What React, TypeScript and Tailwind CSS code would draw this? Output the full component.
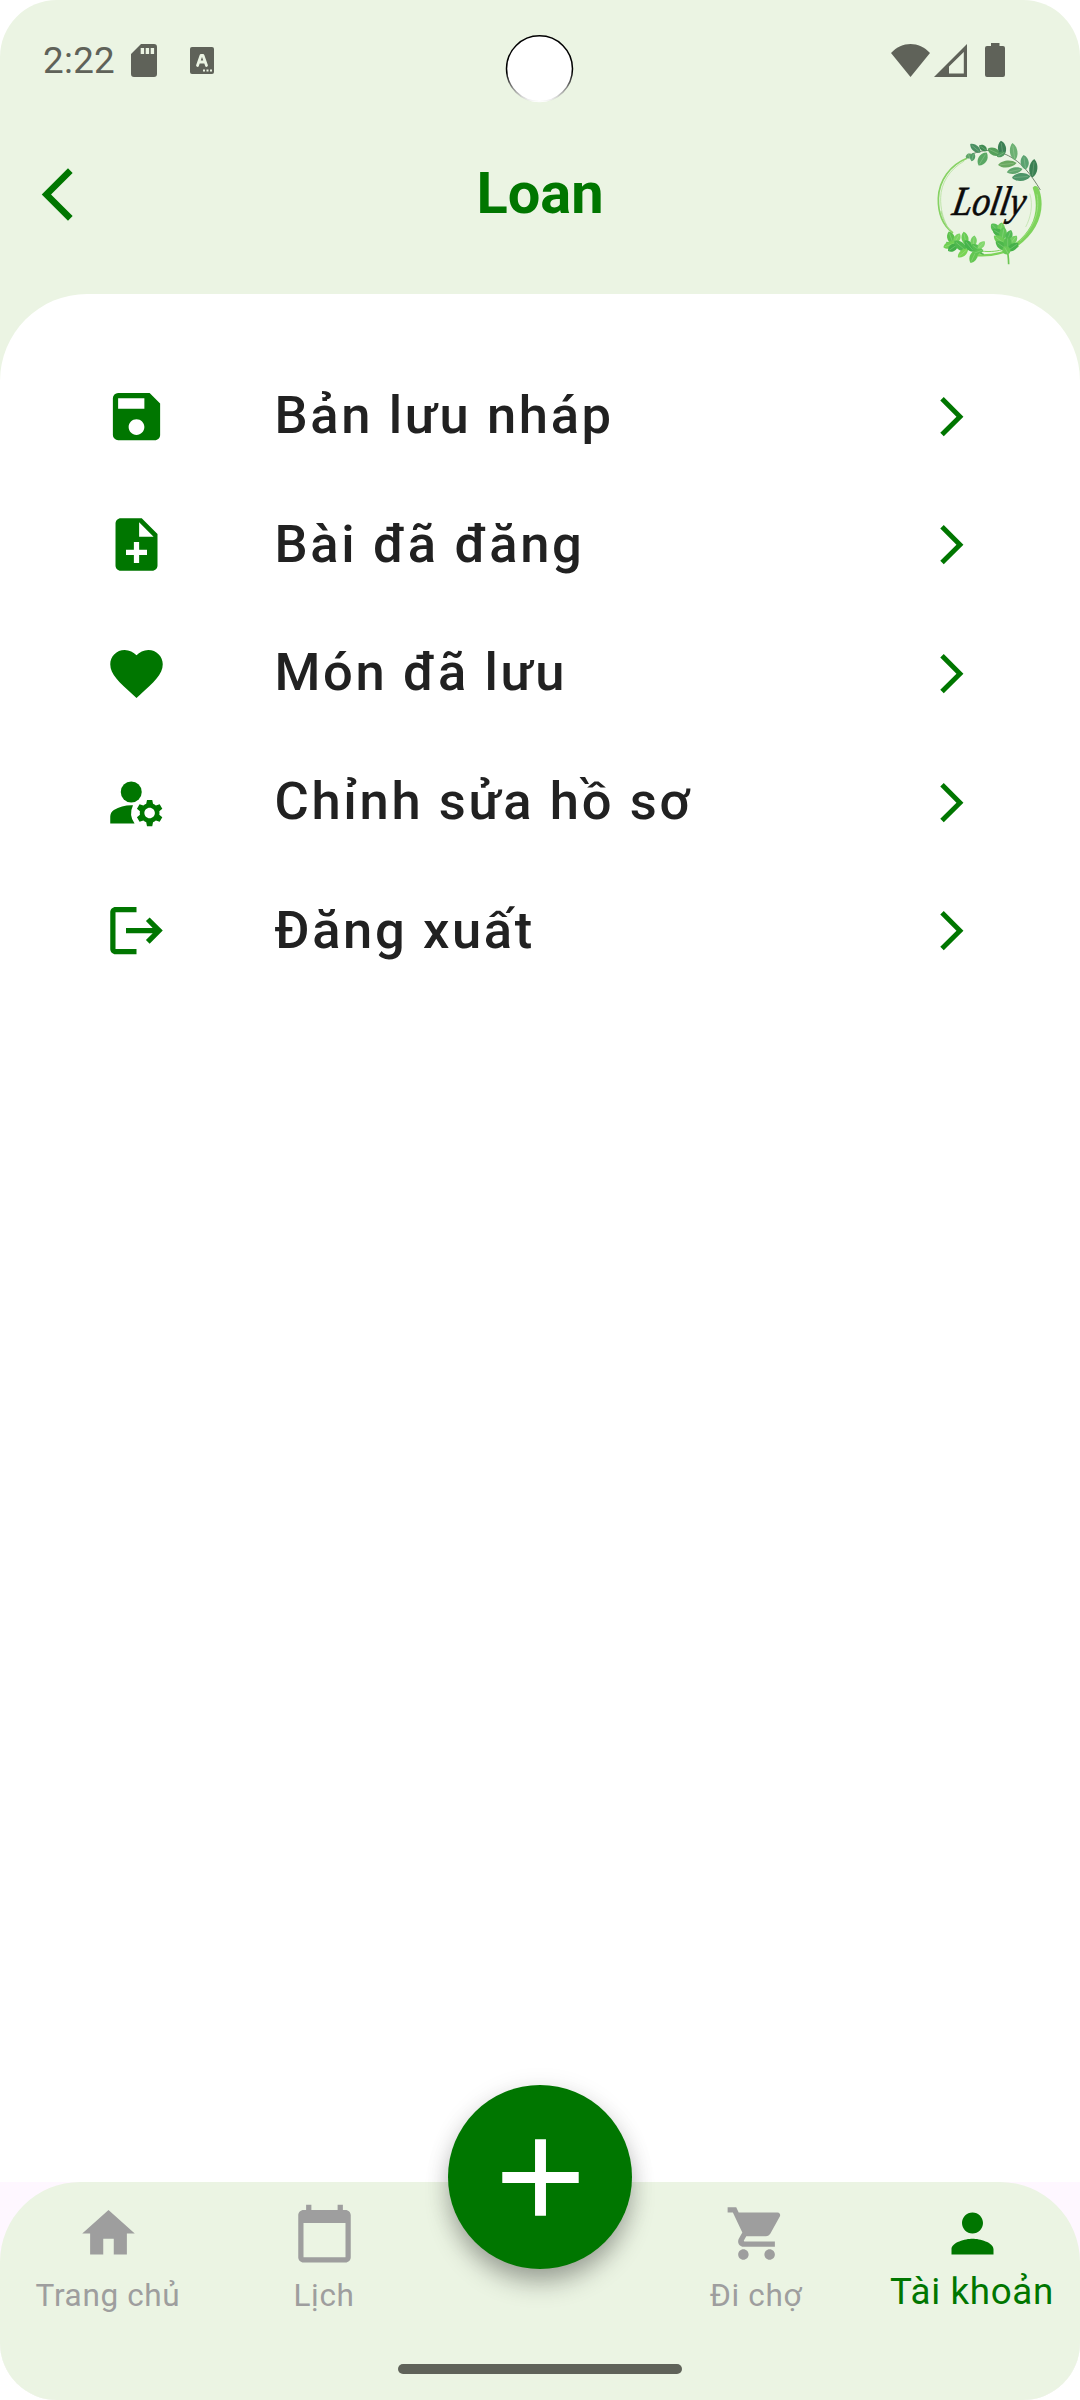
import React from "react";
import {
  MdSave,
  MdNoteAdd,
  MdFavorite,
  MdManageAccounts,
  MdLogout,
  MdHome,
  MdCalendarToday,
  MdShoppingCart,
  MdPerson,
} from "react-icons/md";

type Leaf = [x: number, y: number, rx: number, ry: number, angle: number, fill: string];

const topLeaves: Leaf[] = [
  [144, 75, 11, 8, -20, "#5fa468"],
  [155, 78, 8, 13, 15, "#4f9c66"],
  [163, 52, 10, 20, -50, "#4a8f63"],
  [186, 51, 9, 14, -55, "#3f8a52"],
  [185, 84, 14, 23, 32, "#5aa864"],
  [219, 62, 12, 21, -65, "#55a05a"],
  [243, 52, 13, 23, -8, "#3c8055"],
  [240, 70, 8, 14, 60, "#4f9a5d"],
  [278, 62, 12, 26, -8, "#6cb072"],
  [259, 99, 11, 28, 84, "#6aa860"],
  [311, 94, 13, 22, -8, "#5aa270"],
  [281, 119, 10, 24, 78, "#5fa56c"],
  [337, 112, 13, 28, 6, "#3b8054"],
  [301, 138, 13, 28, 86, "#4d9568"],
];

const leftFronds: Leaf[] = [
  [90, 320, 12, 20, -20, "#5cc24c"],
  [86, 342, 11, 20, 70, "#6fd052"],
  [96, 350, 11, 18, 55, "#43b048"],
  [108, 322, 10, 17, 30, "#7bd561"],
  [118, 345, 13, 24, -50, "#4fb94e"],
  [132, 322, 11, 20, -12, "#68cc55"],
  [126, 366, 10, 20, 50, "#79d455"],
  [145, 345, 12, 22, -40, "#46b44a"],
  [158, 330, 10, 17, 8, "#75d063"],
  [158, 376, 12, 22, 25, "#63c651"],
  [168, 352, 11, 20, -55, "#55be50"],
  [181, 342, 9, 15, 45, "#82d86d"],
  [172, 362, 8, 16, 70, "#5fc652"],
];

const rightFronds: Leaf[] = [
  [222, 290, 12, 16, -45, "#58bf57"],
  [240, 290, 12, 16, 10, "#6fcf5d"],
  [232, 305, 12, 20, -60, "#47b34c"],
  [246, 308, 12, 20, 10, "#60c556"],
  [235, 326, 12, 20, -55, "#6dcc58"],
  [264, 314, 11, 18, 20, "#51b953"],
  [242, 344, 12, 22, -55, "#4eb74c"],
  [276, 328, 11, 18, 40, "#73cf62"],
  [260, 338, 13, 22, 0, "#58bf51"],
  [276, 348, 11, 20, 55, "#46b149"],
  [256, 358, 13, 14, -30, "#6aca57"],
];

function Leaves({ items }: { items: Leaf[] }) {
  return (
    <>
      {items.map(([x, y, rx, ry, a, fill], i) => (
        <g key={i} transform={`translate(${x} ${y}) rotate(${a})`}>
          <path
            d={`M0 ${-ry} C${rx * 1.3} ${-ry * 0.5} ${rx * 1.2} ${ry * 0.6} 0 ${ry} C${-rx * 1.2} ${ry * 0.6} ${-rx * 1.3} ${-ry * 0.5} 0 ${-ry}Z`}
            fill={fill}
          />
          <path d={`M0 ${-ry * 0.7}V${ry * 0.8}`} stroke="#d8efc8" strokeOpacity="0.45" strokeWidth="1.5" />
        </g>
      ))}
    </>
  );
}

function Logo() {
  return (
    <svg viewBox="0 0 420 432" className="h-[144px] w-[140px]" fill="none">
      <path d="M138 82 C88 102 54 148 52 202 C51 246 66 284 96 306" stroke="#86d263" strokeWidth="5" />
      <path d="M130 90 C84 116 60 158 59 200 C58 232 66 262 78 284" stroke="#a9dd8e" strokeWidth="2" />
      <path d="M60 240 C64 262 74 284 88 298" stroke="#a9dd8e" strokeWidth="3" />
      <path
        d="M335 170 C342 160 352 166 356 180 C374 240 350 302 290 346 L284 336 C338 294 358 236 335 170Z"
        fill="#7ed35b"
      />
      <path d="M348 190 C358 240 338 290 296 330" stroke="#9be07d" strokeWidth="3" />
      <path d="M326 188 C338 222 328 262 314 288" stroke="#b5dfa0" strokeWidth="2" />
      <path d="M160 372 C196 376 240 372 292 344" stroke="#7ed35b" strokeWidth="7" />
      <path d="M180 360 C210 364 232 360 250 354" stroke="#7ed35b" strokeWidth="3" />
      <path d="M138 76 C190 50 226 56 262 74 C300 92 330 130 358 177" stroke="#5c6f58" strokeWidth="2.5" />
      <Leaves items={topLeaves} />
      <path d="M76 334 C110 336 140 350 188 370" stroke="#4db04a" strokeWidth="4" />
      <Leaves items={leftFronds} />
      <path d="M222 284 C246 312 262 340 263 400" stroke="#6cc653" strokeWidth="5" />
      <Leaves items={rightFronds} />
      <text
        transform="translate(90 252) skewX(-10)"
        fontFamily="'Liberation Serif', serif"
        fontStyle="italic"
        fontSize="124"
        fill="#0b0b0b"
        stroke="#0b0b0b"
        strokeWidth="2"
        textLength="218"
        lengthAdjust="spacingAndGlyphs"
      >
        Lolly
      </text>
    </svg>
  );
}

function StatusBar() {
  return (
    <div className="relative flex h-[120px] items-center text-[#5f6259]">
      <span className="ml-[43px] w-[88px] pt-[2px] text-[36.750px] leading-none tracking-[0.300px]">2:22</span>
      <svg viewBox="0 0 26 33" className="h-[33px] w-[26px]">
        <path
          fill="currentColor"
          fillRule="evenodd"
          d="M10 0h13a3 3 0 0 1 3 3v27a3 3 0 0 1-3 3H3a3 3 0 0 1-3-3V10zM9.7 4v6h3.4V4zm5 0v6h3.4V4zm5 0v6h3.4V4z"
        />
      </svg>
      <svg viewBox="0 0 24 27" className="ml-[33px] h-[27px] w-6">
        <rect width="24" height="27" rx="2" fill="currentColor" />
        <path d="M7.5 18.5L11 8.5h2l3.500 10M9 15h6" fill="none" stroke="#ebf4e3" strokeWidth="2.8" strokeLinecap="round" strokeLinejoin="round" />
        <path d="M13 22.500h2v2h-2zM16.500 22.500h2v2h-2zM20 22.500h2v2h-2z" fill="#ebf4e3" />
      </svg>
      <svg viewBox="0 0 70 70" className="absolute top-[34px] left-[505px] h-[70px] w-[70px]">
        <defs>
          <linearGradient id="lens" x1="0" y1="0" x2="0" y2="1">
            <stop offset="0" stopColor="#000" />
            <stop offset="0.55" stopColor="#000" />
            <stop offset="1" stopColor="#000" stopOpacity="0" />
          </linearGradient>
        </defs>
        <circle cx="34.500" cy="34.800" r="33.500" fill="#fff" />
        <circle cx="34.500" cy="34.800" r="33" fill="none" stroke="url(#lens)" strokeWidth="1.500" />
      </svg>
      <svg viewBox="0 0 39 33" className="ml-auto h-[33px] w-[39px]">
        <path fill="currentColor" d="M0 9C11-3 28-3 39 9L19.500 33z" />
      </svg>
      <svg viewBox="0 0 33 33" className="ml-[4px] h-[33px] w-[33px]">
        <path fill="currentColor" fillRule="evenodd" d="M33 0v33H0zM29.800 8L15 22.500v7h14.800z" />
      </svg>
      <svg viewBox="0 0 20 34" className="mr-[75px] ml-[18px] h-[34px] w-5">
        <path fill="currentColor" d="M6 0h8.500v3H18a2 2 0 0 1 2 2v27a2 2 0 0 1-2 2H2a2 2 0 0 1-2-2V5a2 2 0 0 1 2-2h4z" />
      </svg>
    </div>
  );
}

const menu = [
  { label: "Bản lưu nháp", Icon: MdSave },
  { label: "Bài đã đăng", Icon: MdNoteAdd },
  { label: "Món đã lưu", Icon: MdFavorite },
  { label: "Chỉnh sửa hồ sơ", Icon: MdManageAccounts },
  { label: "Đăng xuất", Icon: MdLogout },
];

const tabs = [
  { label: "Trang chủ", Icon: MdHome },
  { label: "Lịch", Icon: MdCalendarToday },
  null,
  { label: "Đi chợ", Icon: MdShoppingCart },
  { label: "Tài khoản", Icon: MdPerson, active: true },
];

export default function App() {
  return (
    <div className="h-[2400px] w-[1080px] bg-white font-['Roboto',sans-serif]">
      <div className="relative flex h-full flex-col overflow-hidden rounded-[57px] bg-[#ebf4e3]">
        <StatusBar />

        <header className="flex h-[174px] items-start justify-between">
          <svg viewBox="0 0 24 24" className="mt-[43px] ml-[26px] h-[63px] w-[63px]">
            <path fill="#007600" d="M17.770 3.770L16 2 6 12l10 10 1.770-1.770L9.540 12z" />
          </svg>
          <h1 className="mt-[39px] ml-[70px] text-[57.750px] leading-[68px] font-bold text-[#007600]">Loan</h1>
          <div className="mt-[11px] mr-[19px]">
            <Logo />
          </div>
        </header>

        <main className="h-[1888px] rounded-t-[87px] bg-white pt-[58px]">
          <ul>
            {menu.map(({ label, Icon }) => (
              <li key={label} className="flex h-[128.625px] items-center pr-[105px] pl-[105px]">
                <Icon className="h-[63px] w-[63px] text-[#007600]" />
                <span className="ml-[106.500px] flex-1 pb-[2px] text-[52.500px] leading-none font-medium tracking-[2.625px] text-[#212121]">
                  {label}
                </span>
                <svg viewBox="0 0 24 24" className="h-[47.250px] w-[47.250px]">
                  <path fill="#007600" d="M6.230 20.230L8 22l10-10L8 2 6.230 3.770 14.460 12z" />
                </svg>
              </li>
            ))}
          </ul>
        </main>

        <div className="h-[218px] bg-[#fef7ff]">
          <nav className="flex h-full rounded-t-[80px] bg-[#ebf4e3]">
            {tabs.map((tab, i) =>
              tab ? (
                <div
                  key={tab.label}
                  className={
                    tab.active
                      ? "flex w-[216px] flex-col items-center pt-5 text-[36.750px] tracking-[0.650px] text-[#007600]"
                      : "flex w-[216px] flex-col items-center pt-5 text-[31.500px] tracking-[0.650px] text-[#9e9e9e]"
                  }
                >
                  <tab.Icon className="h-[63px] w-[63px]" />
                  <span className={tab.active ? "mt-[5px] leading-[43px] whitespace-nowrap" : "mt-[12px] leading-[37px] whitespace-nowrap"}>
                    {tab.label}
                  </span>
                </div>
              ) : (
                <div key={i} className="w-[216px]" />
              ),
            )}
          </nav>
        </div>

        <button
          aria-label="+"
          className="absolute top-[2085px] left-[448px] flex h-[184px] w-[184px] items-center justify-center rounded-full bg-[#007600] shadow-[0_16px_26px_-3px_rgba(0,0,0,0.300),0_3px_24px_0_rgba(0,0,0,0.100)]"
        >
          <svg viewBox="0 0 24 24" className="h-[131px] w-[131px]">
            <path fill="#fff" d="M19 13h-6v6h-2v-6H5v-2h6V5h2v6h6v2z" />
          </svg>
        </button>
        <div className="absolute top-[2364px] left-[398px] h-[10px] w-[284px] rounded-full bg-[#5f6259]" />
      </div>
    </div>
  );
}
